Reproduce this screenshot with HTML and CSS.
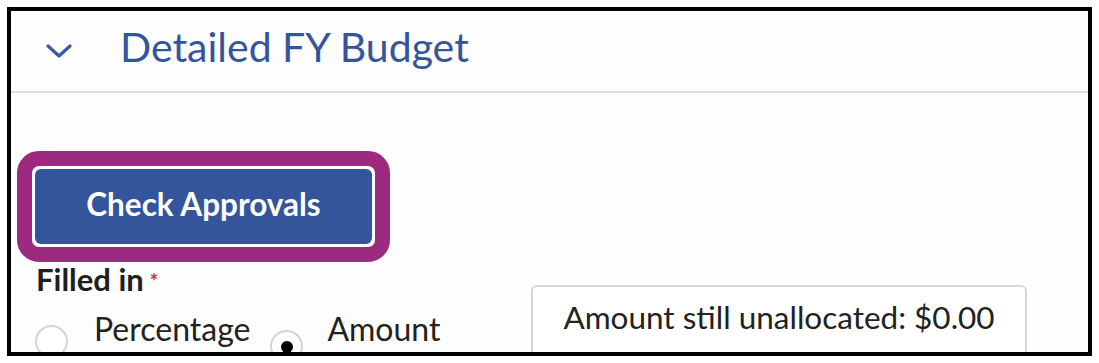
FILE: index.html
```html
<!DOCTYPE html>
<html lang="en">
<head>
    <meta charset="UTF-8">
    <meta name="viewport" content="width=device-width, initial-scale=1.0">
    <title>Detailed FY Budget</title>
    <link rel="stylesheet" href="styles.css">
</head>
<body>

<div class="frame">
    <div class="section-header">
        <svg class="chevron" width="26" height="16" viewBox="0 0 26 16">
            <path d="M2 3 L13 13 L24 3" fill="none" stroke="#3a5ba3" stroke-width="3.2" stroke-linecap="round" stroke-linejoin="round"/>
        </svg>
        <h2 class="section-title">Detailed FY Budget</h2>
    </div>

    <div class="section-body">
        <div class="highlight">
            <button class="btn-primary">Check Approvals</button>
        </div>

        <div class="field-row">
            <div class="field-left">
                <div class="field-label">Filled in<span class="required">*</span></div>
                <div class="radio-group">
                    <label class="radio-option">
                        <span class="radio"></span>
                        <span class="radio-text">Percentage</span>
                    </label>
                    <label class="radio-option checked">
                        <span class="radio"></span>
                        <span class="radio-text">Amount</span>
                    </label>
                </div>
            </div>
            <div class="unallocated">Amount still unallocated: $0.00</div>
        </div>
    </div>
</div>

</body>
</html>
```

FILE: styles.css
```css
body {
    margin: 0;
    background-color: #fff;
    font-family: Lato, "Open Sans", sans-serif;
    color: #222;
}

.frame {
    margin: 7px;
    height: 341px;
    border: 4px solid #000;
    overflow: hidden;
    background-color: #fdfdfd;
}

.section-header {
    display: flex;
    align-items: flex-start;
    box-sizing: border-box;
    height: 82px;
    padding-top: 15px;
    border-bottom: 2px solid #dcdcdc;
}

.chevron {
    margin-left: 35px;
    margin-top: 17px;
}

.section-title {
    margin: 0 0 0 48px;
    font-size: 41px;
    line-height: 1;
    font-weight: 400;
    color: #34559d;
}

.section-body {
    padding: 58px 0 0 6px;
}

.highlight {
    display: inline-block;
    vertical-align: top;
    border: 15px solid #9c2a7f;
    border-radius: 22px;
    padding: 3px;
    background-color: #fff;
}

.btn-primary {
    display: block;
    width: 337px;
    height: 75px;
    padding: 0 0 5px;
    background-color: #34559b;
    border: none;
    border-radius: 6px;
    color: #fff;
    font-family: Lato, sans-serif;
    font-size: 31.5px;
    font-weight: 700;
    cursor: pointer;
}

.field-row {
    display: flex;
    align-items: flex-start;
}

.field-left {
    width: 514px;
    flex-shrink: 0;
}

.field-label {
    margin: 2px 0 0 19px;
    font-size: 31px;
    line-height: 1;
    font-weight: 700;
    color: #1f1f1f;
}

.required {
    color: #d9302b;
    font-size: 20px;
    vertical-align: 2px;
    margin-left: 6px;
}

.radio-group {
    display: flex;
    margin: 18px 0 0 18px;
}

.radio-option {
    display: flex;
    align-items: flex-start;
    font-size: 32px;
    line-height: 1;
    color: #222;
}

.radio {
    box-sizing: border-box;
    width: 33px;
    height: 33px;
    border: 2px solid #d4d4d4;
    border-radius: 50%;
    margin-top: 12px;
    margin-right: 26px;
    position: relative;
    background-color: #fff;
}

.radio-option.checked {
    margin-left: 20px;
}

.radio-option.checked .radio {
    margin-top: 17px;
    margin-right: 24px;
}

.radio-option.checked .radio::after {
    content: "";
    position: absolute;
    left: 8.5px;
    top: 8.5px;
    width: 12px;
    height: 12px;
    border-radius: 50%;
    background-color: #000;
}

.unallocated {
    margin-top: 23px;
    width: 496px;
    height: 80px;
    box-sizing: border-box;
    padding-top: 15px;
    border: 2px solid #d6d6d6;
    border-radius: 6px;
    text-align: center;
    font-size: 31.5px;
    line-height: 1;
    background-color: #fff;
}
```
